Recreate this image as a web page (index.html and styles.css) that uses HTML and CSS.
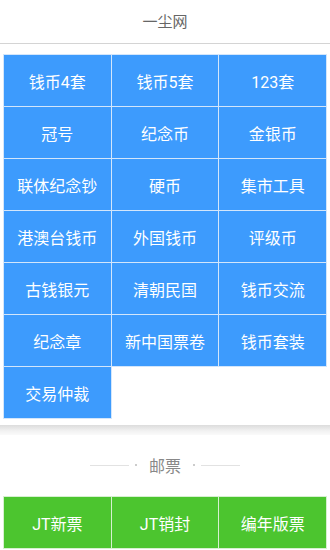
FILE: index.html
```html
<!DOCTYPE html>
<html lang="zh-CN">
<head>
  <meta charset="UTF-8" />
  <meta name="viewport" content="width=device-width, initial-scale=1.0" />
  <title>一尘网</title>
  <link rel="stylesheet" href="styles.css">
</head>
<body>

  <!-- Header -->
  <div class="header">一尘网</div>

  <!-- Coins -->
  <div class="section">
    <div class="grid blue">
      <a class="cell">钱币4套</a>
      <a class="cell">钱币5套</a>
      <a class="cell">123套</a>
      <a class="cell">冠号</a>
      <a class="cell">纪念币</a>
      <a class="cell">金银币</a>
      <a class="cell">联体纪念钞</a>
      <a class="cell">硬币</a>
      <a class="cell">集市工具</a>
      <a class="cell">港澳台钱币</a>
      <a class="cell">外国钱币</a>
      <a class="cell">评级币</a>
      <a class="cell">古钱银元</a>
      <a class="cell">清朝民国</a>
      <a class="cell">钱币交流</a>
      <a class="cell">纪念章</a>
      <a class="cell">新中国票卷</a>
      <a class="cell">钱币套装</a>
      <a class="cell">交易仲裁</a>
    </div>
  </div>

  <div class="divider"></div>

  <!-- Stamps -->
  <div class="section stamps">
    <div class="section-title">
      <span class="rule"></span>
      <span class="dot"></span>
      <span class="label">邮票</span>
      <span class="dot"></span>
      <span class="rule"></span>
    </div>
    <div class="grid green">
      <a class="cell">JT新票</a>
      <a class="cell">JT销封</a>
      <a class="cell">编年版票</a>
    </div>
  </div>

</body>
</html>
```

FILE: styles.css
```css
body {
  margin: 0;
  background: #fff;
  font-family: Roboto, "Noto Sans CJK SC", sans-serif;
  overflow: hidden;
}

.header {
  height: 41px;
  padding-top: 2px;
  line-height: 41px;
  text-align: center;
  font-size: 15px;
  color: #666;
  border-bottom: 1px solid #d4d4d4;
}

.section {
  padding: 11px 4px 7px 4px;
}

.stamps {
  padding-top: 0;
}

.grid {
  display: grid;
  grid-template-columns: repeat(3, 1fr);
  gap: 1px;
}

.cell {
  height: 51px;
  display: flex;
  align-items: center;
  justify-content: center;
  color: #fff;
  font-size: 16px;
  text-decoration: none;
}

.blue .cell {
  background: #3d9bfd;
  box-shadow: 0 0 0 1px #d3e6fb;
}

.green .cell {
  background: #4cc52f;
  box-shadow: 0 0 0 1px #d6f0d0;
}

.divider {
  height: 10px;
  background: linear-gradient(#dcdcdc, #f2f2f2 60%, #fafafa);
}

/* Section title */
.section-title {
  height: 60px;
  padding-bottom: 2px;
  display: flex;
  align-items: center;
  justify-content: center;
  color: #888;
  font-size: 16px;
}

.section-title .rule {
  width: 39px;
  height: 1px;
  background: #e2e2e2;
}

.section-title .dot {
  width: 2px;
  height: 2px;
  border-radius: 1px;
  background: #bbb;
  margin: 0 6px;
}

.section-title .label {
  margin: 0 6px;
}
```
